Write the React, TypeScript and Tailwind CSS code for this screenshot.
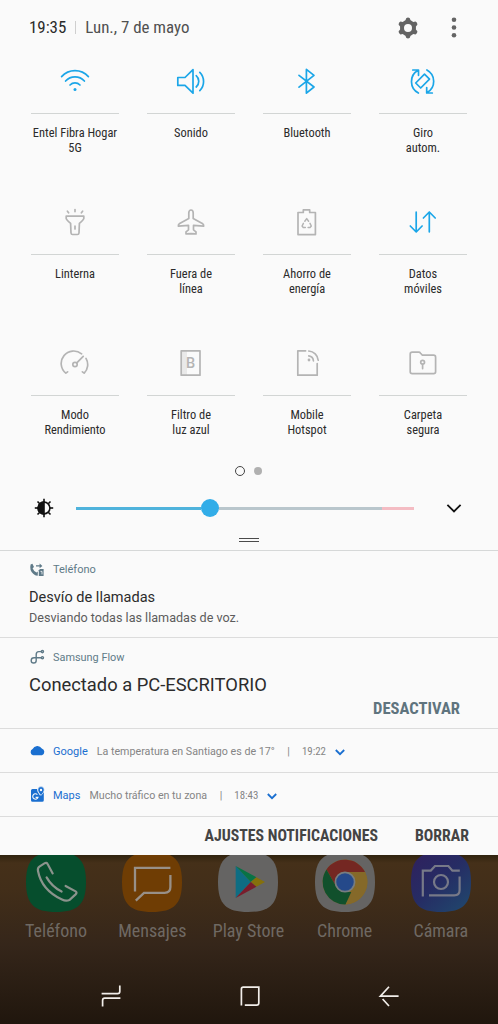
import type { ReactNode } from "react";

const CONDENSED = "font-['Roboto_Condensed',Roboto,sans-serif] [font-stretch:75%]";

interface IconProps {
  children: ReactNode;
  active?: boolean;
}

function TileIcon({ children, active }: IconProps) {
  return (
    <svg
      viewBox="0 0 30 30"
      className={active ? "size-[30px] text-[#1ba6e8]" : "size-[30px] text-[#b4b4b4]"}
      fill="none"
      stroke="currentColor"
      strokeWidth={1.7}
      strokeLinecap="round"
      strokeLinejoin="round"
    >
      {children}
    </svg>
  );
}

interface Tile {
  lines: string[];
  active?: boolean;
  icon: ReactNode;
}

const tiles: Tile[] = [
  {
    lines: ["Entel Fibra Hogar", "5G"],
    active: true,
    icon: (
      <>
        <path d="M1.6 10.6A18 18 0 0 1 28.4 10.6M5.6 15A12.6 12.6 0 0 1 24.4 15M10 19A7 7 0 0 1 20 19" />
        <circle cx="15" cy="23.4" r="1.5" fill="currentColor" stroke="none" />
      </>
    ),
  },
  {
    lines: ["Sonido"],
    active: true,
    icon: (
      <path d="M1.8 11.5H9L17 3.6V27.2L9 19.4H1.8ZM20.2 9.7A7.5 7.5 0 0 1 20.2 21M23.8 6.3A13 13 0 0 1 23.8 24.6" />
    ),
  },
  {
    lines: ["Bluetooth"],
    active: true,
    icon: <path d="M7 9.3L22 21L14.4 27.2V3.4L22 9.3L7 21.2" />,
  },
  {
    lines: ["Giro", "autom."],
    active: true,
    icon: (
      <>
        <path d="M10.4 27A12.9 12.9 0 0 1 10.1 4.3M4.8 4H10.5V9.3M18.9 4A12.9 12.9 0 0 1 19.1 26.6M24.3 27H18.7V21.6" />
        <path d="M16.5 8.2L21.5 13.2L12.7 22L7.7 17Z" />
      </>
    ),
  },
  {
    lines: ["Linterna"],
    icon: (
      <path d="M6.2 9.2H23.8V11.6Q23.6 12.7 19.4 16.4L19 26Q18.8 27.5 17.5 27.5H12.5Q11.2 27.5 11 26L10.6 16.4Q6.4 12.7 6.2 11.6ZM7.4 4.2L8.6 5.8M15 2.6V4.6M22.6 4.2L21.4 5.8M15 19.2V22" />
    ),
  },
  {
    lines: ["Fuera de", "línea"],
    icon: (
      <path d="M12.8 6C12.8 2 17.2 2 17.2 6V11.6L26.8 16.8Q28 17.8 27.6 19.2L17.5 18.3V22.8L20 24.8V26.9L15 26.6L10 26.9V24.8L12.5 22.8V18.3L2.4 19.2Q2 17.8 3.2 16.8L12.8 11.6Z" />
    ),
  },
  {
    lines: ["Ahorro de", "energía"],
    icon: (
      <>
        <path d="M6 5.5H11.3V2.9H17.7V5.5H23.4V27.6H6Z" />
        <path d="M12.8 14.2L14.7 11.6L16.6 14.2M18 16.4L19.3 19L18 20.6H16.1M13.3 20.6H11.3L10.1 19L11.4 16.4" strokeWidth="1.5" />
      </>
    ),
  },
  {
    lines: ["Datos", "móviles"],
    active: true,
    icon: <path d="M8.2 5.2V24.8M2.3 19L8.2 25L14.1 19M21.3 24.8V5.2M15.4 11L21.3 5L27.2 11" />,
  },
  {
    lines: ["Modo", "Rendimiento"],
    icon: (
      <>
        <path d="M7.6 23.8L5.8 25.2A12.3 12.3 0 0 1 21.6 5.8M26 10.4A12.3 12.3 0 0 1 24.2 25.2L22.4 23.8M23.2 8.3L16.8 14.8" />
        <circle cx="15" cy="16.5" r="2.2" />
      </>
    ),
  },
  {
    lines: ["Filtro de", "luz azul"],
    icon: (
      <>
        <path d="M5.3 3H11V27H5.3Z" fill="#e9e9e9" stroke="none" />
        <path d="M5.2 2.8H24V27.2H5.2Z" />
        <text
          x="14.6"
          y="20"
          textAnchor="middle"
          fontSize="14.5"
          fontWeight="500"
          fontFamily="Roboto"
          fill="currentColor"
          stroke="none"
        >
          B
        </text>
      </>
    ),
  },
  {
    lines: ["Mobile", "Hotspot"],
    icon: (
      <>
        <path d="M13.6 2.8H5.8V27.2H25.2V15.6M16.8 3A10 10 0 0 1 26.2 12.2M16.8 7.8A5.4 5.4 0 0 1 21.4 12.8" />
        <circle cx="17" cy="12" r="1.4" fill="currentColor" stroke="none" />
      </>
    ),
  },
  {
    lines: ["Carpeta", "segura"],
    icon: (
      <>
        <path d="M2.2 6.2Q2.2 4.2 4.2 4.2H10.8Q11.8 4.2 12.6 5.2L14.4 7.2H25.6Q27.6 7.2 27.6 9.2V23.8Q27.6 25.6 25.6 25.6H4.2Q2.2 25.6 2.2 23.8Z" />
        <circle cx="14.6" cy="14.2" r="1.9" />
        <path d="M14.6 16.4V20.6" />
      </>
    ),
  },
];

function QuickTile({ lines, active, icon }: Tile) {
  return (
    <div className="flex h-[100px] flex-col">
      <div className="flex h-[59px] shrink-0 items-center justify-center border-b border-[#d2d5d4] pb-[6px]">
        <TileIcon active={active}>{icon}</TileIcon>
      </div>
      <div className={`mt-[12px] text-center text-[12.4px] leading-[14.5px] whitespace-nowrap text-[#2b2b2b] ${CONDENSED}`}>
        {lines.map((line) => (
          <p key={line}>{line}</p>
        ))}
      </div>
    </div>
  );
}

function Header() {
  return (
    <header className={`flex h-[55px] items-center pr-[41px] pl-[29px] text-[16.9px] ${CONDENSED}`}>
      <span className="text-[#2a2a2a]">19:35</span>
      <span className="mr-[9px] ml-[9px] h-[13px] w-px bg-[#cfcfcf]" />
      <span className="text-[#505050]">Lun., 7 de mayo</span>
      <svg viewBox="0 0 22 22" className="ml-auto size-[22px] text-[#646464]">
        <circle cx="11" cy="11" r="6" fill="none" stroke="currentColor" strokeWidth="4" />
        {[0, 60, 120, 180, 240, 300].map((a) => (
          <path
            key={a}
            d="M8 4.6L9.2 1.2Q11 0 12.8 1.2L14 4.6Z"
            fill="currentColor"
            transform={`rotate(${a} 11 11)`}
          />
        ))}
      </svg>
      <svg viewBox="0 0 6 22" className="ml-[32px] h-[22px] w-[6px]" fill="#646464">
        <circle cx="3" cy="2.8" r="2.3" />
        <circle cx="3" cy="10.5" r="2.3" />
        <circle cx="3" cy="18.2" r="2.3" />
      </svg>
    </header>
  );
}

function Brightness() {
  return (
    <div className="flex h-[56px] items-center pr-[36px] pl-[34px]">
      <svg viewBox="0 0 20 20" className="size-[20px]" stroke="#111" strokeWidth="1.6">
        {[0, 45, 90, 135, 180, 225, 270, 315].map((a) => (
          <path key={a} d="M10 0.8V4" transform={`rotate(${a} 10 10)`} />
        ))}
        <circle cx="10" cy="10" r="5.9" fill="#fafafa" />
        <path d="M10 4.1A5.9 5.9 0 0 0 10 15.9Z" fill="#111" />
      </svg>
      <div className="ml-[22px] flex h-[18px] w-[338px] items-center">
        <div className="h-[3px] w-[125px] bg-[#4fb3dc]" />
        <div className="size-[18px] rounded-full bg-[#32ade8]" />
        <div className="h-[3px] w-[163px] bg-[#b9c6cc]" />
        <div className="h-[3px] flex-1 bg-[#f4bcc3]" />
      </div>
      <svg viewBox="0 0 16 10" className="ml-auto h-[10px] w-[16px]" fill="none" stroke="#111" strokeWidth="1.8">
        <path d="M1.4 1.8L8 8.4L14.6 1.8" />
      </svg>
    </div>
  );
}

interface CompactProps {
  icon: ReactNode;
  app: string;
  text: string;
  time: string;
}

function CompactNotification({ icon, app, text, time }: CompactProps) {
  return (
    <div className="flex h-[44px] items-center border-b border-[#dcdcdc] pl-[29px] text-[10.7px] text-[#858585]">
      <span className="w-[24px]">{icon}</span>
      <div className="flex items-center pt-[3px]">
        <span className="text-[11px] text-[#1a6fd0]">{app}</span>
        <span className="ml-[9px]">{text}</span>
        <span className="ml-[12.5px]">|</span>
        <span className={`ml-[12px] text-[10.9px] ${CONDENSED}`}>{time}</span>
        <svg viewBox="0 0 10 7" className="ml-[9px] h-[7px] w-[10px]" fill="none" stroke="#1a6fd0" strokeWidth="1.8">
          <path d="M0.8 1L5 5.2L9.2 1" />
        </svg>
      </div>
    </div>
  );
}

function Notifications() {
  return (
    <section className="font-[Roboto,sans-serif]">
      <div className="h-[87px] border-b border-[#dcdcdc] pl-[29px]">
        <div className="flex h-[37px] items-center text-[11px] text-[#5f7a88]">
          <svg viewBox="0 0 16 14" className="mr-[8px] size-[16px]" fill="currentColor">
            <path d="M1.6 1.4L3.4 0.8L5 4L3.6 5.2Q4.8 8.4 7.6 9.6L8.8 8.6V12.6Q6.6 13 4.2 10.8Q0.2 7 1.6 1.4Z" />
            <path d="M7 2.2H10.6V0.6L13.4 2.9L10.6 5.2V3.6H7Z" />
            <path d="M9.8 7.2L11 6H14.6V13H9.8Z" />
            <path d="M11.5 8.4H13V11.4" fill="none" stroke="#fafafa" strokeWidth="0.8" />
          </svg>
          <span className="pt-[2px]">Teléfono</span>
        </div>
        <p className="mt-px text-[14.55px] leading-[18px] text-[#2c2c2c]">Desvío de llamadas</p>
        <p className="mt-[2px] text-[12.6px] leading-[18px] text-[#5c5c5c]">Desviando todas las llamadas de voz.</p>
      </div>
      <div className="h-[91px] border-b border-[#dcdcdc] pl-[29px]">
        <div className="flex h-[37px] items-center text-[10.9px] text-[#5f7a88]">
          <svg
            viewBox="0 0 16 16"
            className="mr-[8px] size-[16px]"
            fill="none"
            stroke="currentColor"
            strokeWidth="1.4"
          >
            <path d="M12.4 2.6H9.8Q7.2 2.6 7.2 5.4V11.4Q7.2 14 4.6 14Q2.2 14 2.2 11.4Q2.2 8.7 5 8.7H12.4" />
            <circle cx="13.4" cy="2.6" r="1.1" />
            <circle cx="13.4" cy="8.7" r="1.1" />
          </svg>
          <span className="pt-[3px]">Samsung Flow</span>
        </div>
        <p className="text-[18.35px] leading-[20px] text-[#2c2c2c]">Conectado a PC-ESCRITORIO</p>
        <p className={`mt-[4px] pr-[38px] text-right text-[16.6px] leading-[20px] font-bold text-[#5f747e] ${CONDENSED}`}>
          DESACTIVAR
        </p>
      </div>
      <CompactNotification
        app="Google"
        text="La temperatura en Santiago es de 17°"
        time="19:22"
        icon={
          <svg viewBox="0 0 17 12" className="h-[12px] w-[17px]" fill="#1a6fd0">
            <path d="M4 10.2A3.3 3.3 0 0 1 3.6 4A5.2 5.2 0 0 1 12.8 3.4A3.6 3.6 0 0 1 13 10.2Z" />
          </svg>
        }
      />
      <CompactNotification
        app="Maps"
        text="Mucho tráfico en tu zona"
        time="18:43"
        icon={
          <svg viewBox="0 0 17 17" className="size-[17px]" fill="#1a6fd0">
            <path d="M3.5 3H8Q8 6 11 9.6Q13 8 14.8 6V14.2Q14.8 15.8 13.2 15.8H3.5Q2 15.8 2 14.2V4.5Q2 3 3.5 3Z" />
            <path d="M8.4 8.6A2.7 2.7 0 1 0 9 11.4H6.6" fill="none" stroke="#fafafa" strokeWidth="1.1" />
            <path d="M12 0.6A3.3 3.3 0 0 1 15.2 4Q15.2 6 12 9.4Q8.8 6 8.8 4A3.3 3.3 0 0 1 12 0.6Z" stroke="#fafafa" strokeWidth="0.6" />
            <circle cx="12" cy="4" r="1.2" fill="#fafafa" />
          </svg>
        }
      />
      <div className={`flex h-[38px] items-center justify-end pr-[29px] text-[15.8px] font-bold text-[#444] ${CONDENSED}`}>
        <span>AJUSTES NOTIFICACIONES</span>
        <span className="ml-[37px]">BORRAR</span>
      </div>
    </section>
  );
}

const SQUIRCLE = "M30 0C52 0 60 8 60 30C60 52 52 60 30 60C8 60 0 52 0 30C0 8 8 0 30 0Z";

const apps = [
  {
    name: "Teléfono",
    art: (
      <>
        <path d={SQUIRCLE} fill="#064e2d" />
        <path
          d="M26.7 21.4L21.6 12Q20.6 10 18.4 11.4L13.4 14.6Q11.4 16 12 19Q15.6 38 36 47.6Q40 49.6 43.4 48L49.6 42.4Q51.4 40.6 49.6 39.4L39.6 34M20.6 25.4Q25.6 34.4 35.6 39.6"
          fill="none"
          stroke="#8b938c"
          strokeWidth="2.2"
          strokeLinecap="round"
        />
      </>
    ),
  },
  {
    name: "Mensajes",
    art: (
      <>
        <path d={SQUIRCLE} fill="#6f3d04" />
        <path
          d="M48.4 15.8H13V39.6M48.4 23V35Q48.4 40.8 42.6 40.8H22L13.8 48.6"
          fill="none"
          stroke="#989088"
          strokeWidth="2.3"
        />
      </>
    ),
  },
  {
    name: "Play Store",
    art: (
      <>
        <path d={SQUIRCLE} fill="#656463" />
        <path d="M17.7 14V46L32.8 30Z" fill="#0e6d83" />
        <path d="M17.7 14L38.4 25.2L32.8 30Z" fill="#087345" />
        <path d="M38.4 25.2L47 30L38.4 34.8L32.8 30Z" fill="#85700c" />
        <path d="M17.7 46L38.4 34.8L32.8 30Z" fill="#791d2c" />
      </>
    ),
  },
  {
    name: "Chrome",
    art: (
      <>
        <path d={SQUIRCLE} fill="#656463" />
        <circle cx="30" cy="30" r="22.4" fill="#856929" />
        <path d="M11.5 17.4A22.4 22.4 0 0 1 50 20H30L21.4 35Z" fill="#742722" />
        <path d="M11.5 17.4L21.4 35Q25 40.5 30 40H38.6L30.5 52.4A22.4 22.4 0 0 1 11.5 17.4Z" fill="#11502c" />
        <path d="M30 20H50A22.4 22.4 0 0 1 30.5 52.4L38.6 35Z" fill="#856929" />
        <circle cx="30" cy="30" r="9.6" fill="#25498a" stroke="#777d80" strokeWidth="1.7" />
      </>
    ),
  },
  {
    name: "Cámara",
    art: (
      <>
        <defs>
          <linearGradient id="camera" x1="0" y1="0" x2="0.9" y2="1">
            <stop offset="0" stopColor="#30205d" />
            <stop offset="0.5" stopColor="#262c64" />
            <stop offset="1" stopColor="#20476d" />
          </linearGradient>
        </defs>
        <path d={SQUIRCLE} fill="url(#camera)" />
        <path
          d="M18 43.4H43.2Q48.6 43.4 48.6 38V24.6M48.8 18.6H41.4L37.4 14H24L19.8 18.6H11.8V44.6"
          fill="none"
          stroke="#777988"
          strokeWidth="2.2"
        />
        <circle cx="30" cy="30" r="7" fill="none" stroke="#777988" strokeWidth="2.2" />
      </>
    ),
  },
];

function Dock() {
  return (
    <footer className="flex h-[169px] flex-col overflow-hidden bg-[linear-gradient(to_bottom,#30230f_0px,#453019_8px,#422e19_35px,#35261a_90px,#20160d_169px)]">
      <div className="-mt-[3px] flex pl-[8px]">
        {apps.map((app) => (
          <div key={app.name} className="flex w-[96.2px] shrink-0 flex-col items-center">
            <svg viewBox="0 0 60 60" className="size-[60px]">
              {app.art}
            </svg>
            <span className={`mt-[7px] text-[18px] leading-[24px] whitespace-nowrap text-[#6f6963] ${CONDENSED}`}>
              {app.name}
            </span>
          </div>
        ))}
      </div>
      <nav className="mt-[41px] flex justify-between pr-[97px] pl-[99px]">
        <svg viewBox="0 0 24 24" className="size-[24px]" fill="none" stroke="#f2eeea" strokeWidth="1.7">
          <path d="M20.8 1.4V7.4Q20.8 9.6 18.6 9.6H2.6M3.6 22.4V16.4Q3.6 14.2 5.8 14.2H21.4" />
        </svg>
        <svg viewBox="0 0 24 24" className="size-[24px]" fill="none" stroke="#f2eeea" strokeWidth="1.7">
          <path d="M3.4 21.4V5Q3.4 3.2 5.2 3.2H20.8V19Q20.8 21.2 18.6 21.2H6.8" />
        </svg>
        <svg viewBox="0 0 24 24" className="size-[24px]" fill="none" stroke="#f2eeea" strokeWidth="1.7">
          <path d="M21.6 12.2H3.4L12 2.8M5.6 15L12 22" />
        </svg>
      </nav>
    </footer>
  );
}

export default function App() {
  return (
    <div className="flex h-[1024px] w-[498px] flex-col overflow-hidden bg-[#fafafa] font-[Roboto,sans-serif]">
      <Header />
      <div className="grid grid-cols-[repeat(4,88px)] gap-x-[28px] gap-y-[41px] pl-[31px]">
        {tiles.map((tile) => (
          <QuickTile key={tile.lines[0]} {...tile} />
        ))}
      </div>
      <div className="flex h-[43px] items-end justify-center gap-[9px] pr-[2px] pb-[4px]">
        <span className="size-[10px] rounded-full border border-[#444]" />
        <span className="mb-[1px] size-[8px] rounded-full bg-[#b0b0b0]" />
      </div>
      <Brightness />
      <div className="flex h-[15px] justify-center border-b border-[#d6d8d8] pt-[2px]">
        <div className="h-[4px] w-[20px] border-y border-[#4a4a4a]" />
      </div>
      <Notifications />
      <Dock />
    </div>
  );
}
